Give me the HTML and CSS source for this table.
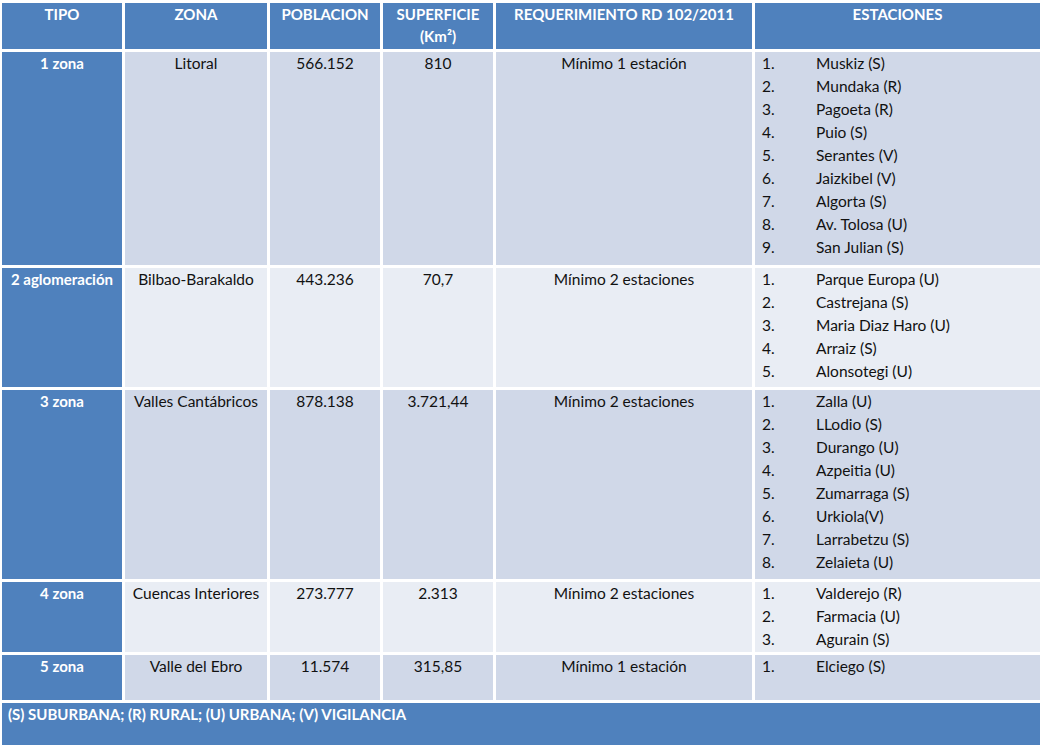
FILE: index.html
```html
<!DOCTYPE html>
<html lang="es">
<head>
<meta charset="utf-8">
<title>Zonas y estaciones</title>
<link rel="stylesheet" href="styles.css">
</head>
<body>
<div class="table">
  <div class="cell head">TIPO</div>
  <div class="cell head">ZONA</div>
  <div class="cell head">POBLACION</div>
  <div class="cell head">SUPERFICIE<br>(Km²)</div>
  <div class="cell head">REQUERIMIENTO RD 102/2011</div>
  <div class="cell head">ESTACIONES</div>

  <div class="cell tipo">1 zona</div>
  <div class="cell odd">Litoral</div>
  <div class="cell odd">566.152</div>
  <div class="cell odd">810</div>
  <div class="cell odd">Mínimo 1 estación</div>
  <div class="cell odd list">
    <div class="item"><span class="num">1.</span><span>Muskiz (S)</span></div>
    <div class="item"><span class="num">2.</span><span>Mundaka (R)</span></div>
    <div class="item"><span class="num">3.</span><span>Pagoeta (R)</span></div>
    <div class="item"><span class="num">4.</span><span>Puio (S)</span></div>
    <div class="item"><span class="num">5.</span><span>Serantes (V)</span></div>
    <div class="item"><span class="num">6.</span><span>Jaizkibel (V)</span></div>
    <div class="item"><span class="num">7.</span><span>Algorta (S)</span></div>
    <div class="item"><span class="num">8.</span><span>Av. Tolosa (U)</span></div>
    <div class="item"><span class="num">9.</span><span>San Julian (S)</span></div>
  </div>

  <div class="cell tipo">2 aglomeración</div>
  <div class="cell even">Bilbao-Barakaldo</div>
  <div class="cell even">443.236</div>
  <div class="cell even">70,7</div>
  <div class="cell even">Mínimo 2 estaciones</div>
  <div class="cell even list">
    <div class="item"><span class="num">1.</span><span>Parque Europa (U)</span></div>
    <div class="item"><span class="num">2.</span><span>Castrejana (S)</span></div>
    <div class="item"><span class="num">3.</span><span>Maria Diaz Haro (U)</span></div>
    <div class="item"><span class="num">4.</span><span>Arraiz (S)</span></div>
    <div class="item"><span class="num">5.</span><span>Alonsotegi (U)</span></div>
  </div>

  <div class="cell tipo">3 zona</div>
  <div class="cell odd">Valles Cantábricos</div>
  <div class="cell odd">878.138</div>
  <div class="cell odd">3.721,44</div>
  <div class="cell odd">Mínimo 2 estaciones</div>
  <div class="cell odd list">
    <div class="item"><span class="num">1.</span><span>Zalla (U)</span></div>
    <div class="item"><span class="num">2.</span><span>LLodio (S)</span></div>
    <div class="item"><span class="num">3.</span><span>Durango (U)</span></div>
    <div class="item"><span class="num">4.</span><span>Azpeitia (U)</span></div>
    <div class="item"><span class="num">5.</span><span>Zumarraga (S)</span></div>
    <div class="item"><span class="num">6.</span><span>Urkiola(V)</span></div>
    <div class="item"><span class="num">7.</span><span>Larrabetzu (S)</span></div>
    <div class="item"><span class="num">8.</span><span>Zelaieta (U)</span></div>
  </div>

  <div class="cell tipo">4 zona</div>
  <div class="cell even">Cuencas Interiores</div>
  <div class="cell even">273.777</div>
  <div class="cell even">2.313</div>
  <div class="cell even">Mínimo 2 estaciones</div>
  <div class="cell even list">
    <div class="item"><span class="num">1.</span><span>Valderejo (R)</span></div>
    <div class="item"><span class="num">2.</span><span>Farmacia (U)</span></div>
    <div class="item"><span class="num">3.</span><span>Agurain (S)</span></div>
  </div>

  <div class="cell tipo">5 zona</div>
  <div class="cell odd">Valle del Ebro</div>
  <div class="cell odd">11.574</div>
  <div class="cell odd">315,85</div>
  <div class="cell odd">Mínimo 1 estación</div>
  <div class="cell odd list">
    <div class="item"><span class="num">1.</span><span>Elciego (S)</span></div>
  </div>

  <div class="cell foot">(S) SUBURBANA; (R) RURAL; (U) URBANA; (V) VIGILANCIA</div>
</div>
</body>
</html>
```
FILE: styles.css
```css
html, body {
  margin: 0;
  padding: 0;
  background: #ffffff;
}

body {
  font-family: "Lato", "Open Sans", "Liberation Sans", sans-serif;
  font-size: 15.5px;
  color: #111111;
}

.table {
  display: grid;
  grid-template-columns: 120px 142px 110px 110px 256px 285px;
  grid-template-rows: 46px 213px 119px 189px 70px 45px 42px;
  gap: 3px;
  margin: 3px 0 0 2px;
}

.cell {
  line-height: 23px;
  text-align: center;
  padding-top: 0;
}

.head {
  background: #4f81bd;
  color: #ffffff;
  font-weight: bold;
  font-size: 15px;
  line-height: 22px;
}

.tipo {
  background: #4f81bd;
  color: #ffffff;
  font-weight: bold;
  font-size: 15px;
}

.odd {
  background: #d0d8e8;
}

.even {
  background: #e9edf4;
}

.list {
  text-align: left;
  padding-left: 7px;
}

.item {
  display: flex;
}

.num {
  width: 54px;
  flex: none;
}

.foot {
  grid-column: 1 / -1;
  background: #4f81bd;
  color: #ffffff;
  font-weight: bold;
  font-size: 15px;
  text-align: left;
  padding: 0 0 0 6px;
}
```
